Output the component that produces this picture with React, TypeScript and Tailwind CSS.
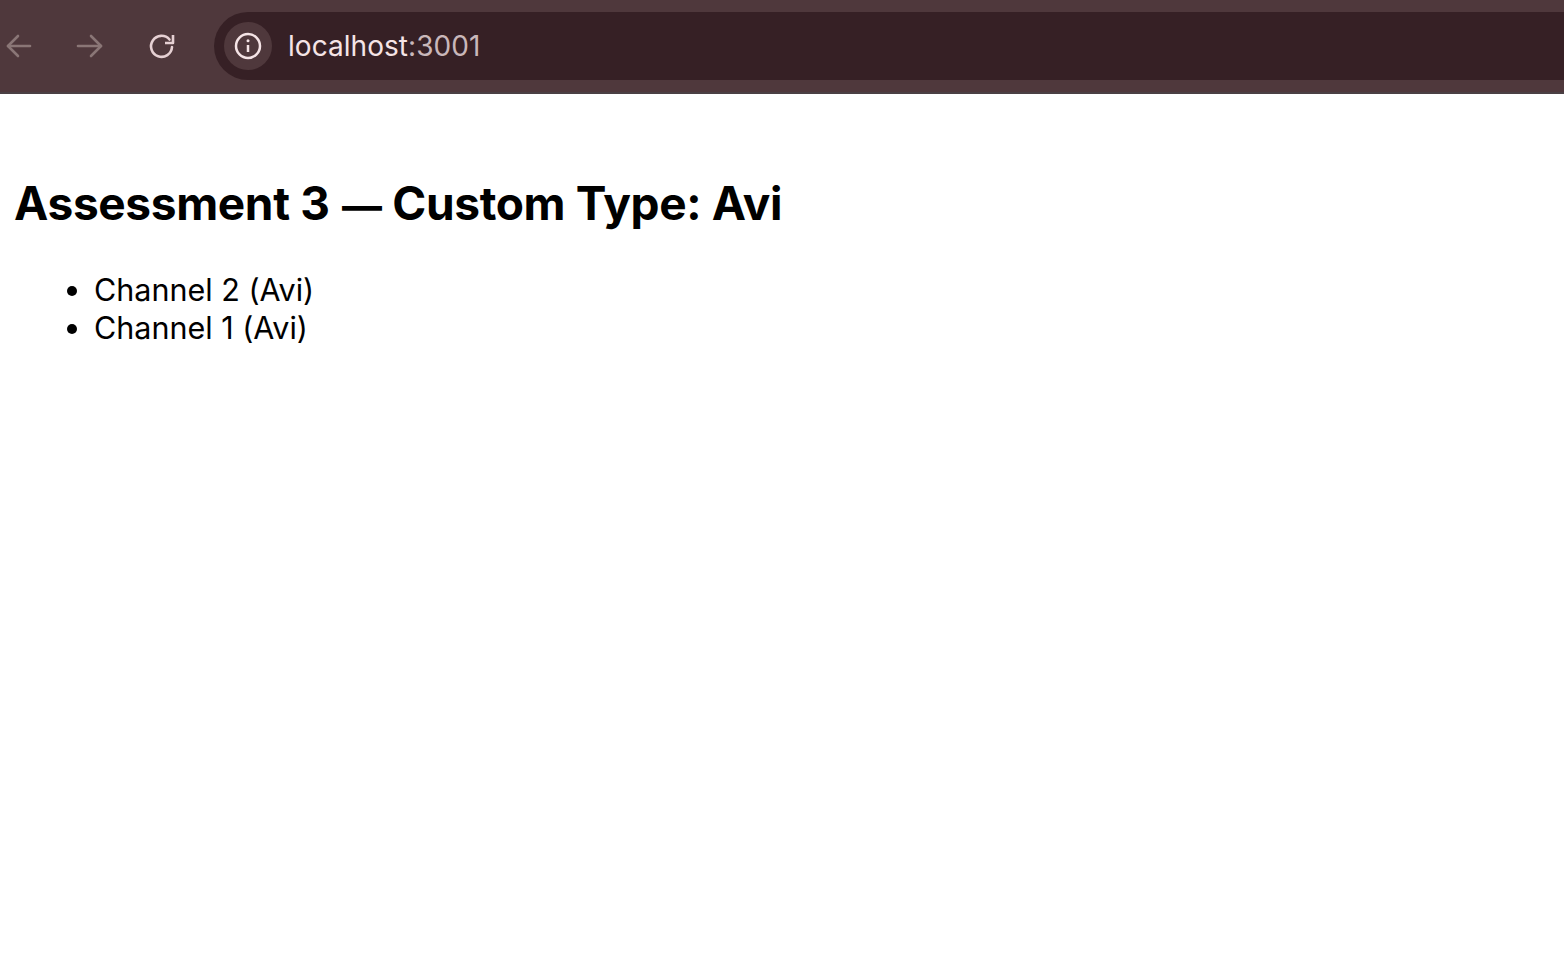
import React from 'react';

function BackIcon() {
  return (
    <svg width="28" height="28" viewBox="0 0 28 28" fill="none" stroke="#8a7676" strokeWidth="2.6" strokeLinecap="round" strokeLinejoin="round">
      <path d="M25 14H3" />
      <path d="M13 4 3 14l10 10" />
    </svg>
  );
}

function ForwardIcon() {
  return (
    <svg width="28" height="28" viewBox="0 0 28 28" fill="none" stroke="#8a7676" strokeWidth="2.6" strokeLinecap="round" strokeLinejoin="round">
      <path d="M2 14h23" />
      <path d="m15 4 10 10-10 10" />
    </svg>
  );
}

function ReloadIcon() {
  return (
    <svg width="28" height="28" viewBox="0 0 28 28" fill="none">
      <path d="M21.5 7.5A10.5 10.5 0 1 0 24 15" stroke="#e6d0d3" strokeWidth="2.6" strokeLinecap="round" />
      <path d="M17 11h8V3" stroke="#e6d0d3" strokeWidth="2.6" strokeLinejoin="round" />
    </svg>
  );
}

function InfoIcon() {
  return (
    <svg width="28" height="28" viewBox="0 0 28 28" fill="none" stroke="#f5e4e6">
      <circle cx="14" cy="14" r="12" strokeWidth="2.5" />
      <path d="M14 13v7" strokeWidth="2.5" />
      <circle cx="14" cy="8.8" r="1.5" fill="#f5e4e6" stroke="none" />
    </svg>
  );
}

export default function App() {
  return (
    <div className="min-h-[956px] bg-white font-['Inter',sans-serif] text-black">
      {/* Browser toolbar */}
      <div className="flex h-[94px] border-b-2 border-[#4a4044] bg-[#4f383c] pt-3 pb-3">
        <div className="flex h-[68px] w-[214px] shrink-0 items-center">
          <div className="ml-[5px] flex w-[28px]"><BackIcon /></div>
          <div className="ml-[43px] flex w-[28px]"><ForwardIcon /></div>
          <div className="ml-[44px] flex w-[28px]"><ReloadIcon /></div>
        </div>
        <div className="flex h-[68px] flex-1 items-center rounded-l-[34px] bg-[#362025] pl-[10px]">
          <div className="flex h-12 w-12 items-center justify-center rounded-full bg-[#4f383c]">
            <InfoIcon />
          </div>
          <span className="ml-4 text-[28px] leading-[34px] tracking-[0.05px] text-[#f5e4e6]">
            localhost<span className="text-[#c9b7ba]">:3001</span>
          </span>
        </div>
      </div>

      {/* Page */}
      <div className="px-[14px] pt-[82px]">
        <h1 className="text-[46px] leading-[54px] font-bold tracking-[-0.35px]">
          Assessment 3 <span className="ml-[2px] text-[40px] leading-none">—</span> Custom Type: Avi
        </h1>
        <ul className="mt-[41px] list-disc pl-[80px] text-[30.5px] leading-[38px]">
          <li>Channel 2 (Avi)</li>
          <li>Channel 1 (Avi)</li>
        </ul>
      </div>
    </div>
  );
}
